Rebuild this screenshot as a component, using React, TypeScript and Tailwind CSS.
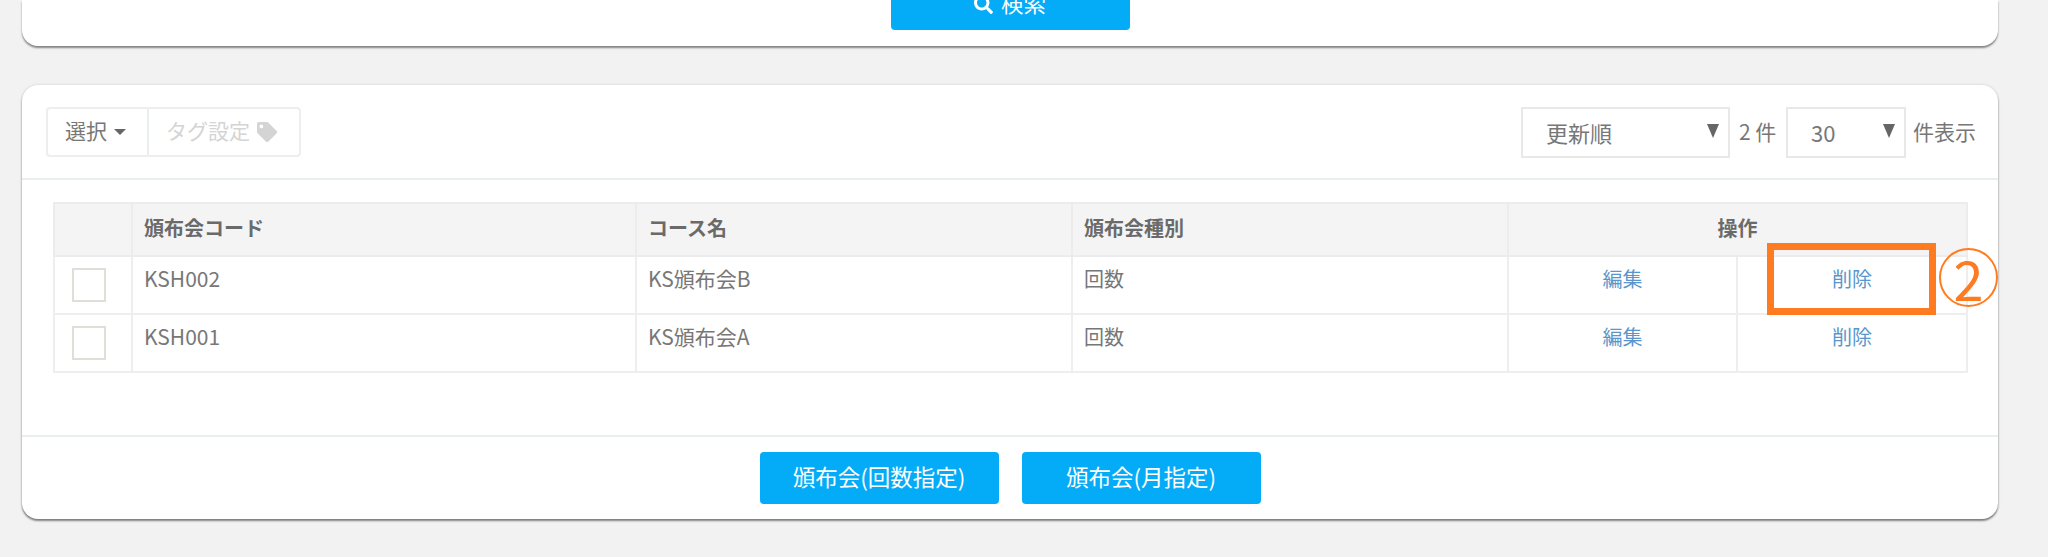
import React from 'react';
import { FaSearch, FaTag } from 'react-icons/fa';

const rows = [
  { code: 'KSH002', course: 'KS頒布会B', kind: '回数' },
  { code: 'KSH001', course: 'KS頒布会A', kind: '回数' },
];

const fontStack = { fontFamily: '"Noto Sans CJK JP", "Noto Sans", sans-serif' };

function SelectBox({ label, className }: { label: string; className: string }) {
  return (
    <div className={`h-[51px] flex items-center justify-between border-2 border-[#e8e8e8] bg-white pl-[23px] pr-[9px] text-[22px] text-[#777] ${className}`}>
      <span>{label}</span>
      <span className="w-0 h-0 border-x-[6px] border-x-transparent border-t-[14px] border-t-[#666] -mt-[3px]" />
    </div>
  );
}

function BlueButton({ children }: { children: React.ReactNode }) {
  return (
    <button className="w-[239px] h-[52px] shrink-0 flex items-center justify-center gap-2 rounded-[4px] bg-[#04abf7] text-white text-[22.5px]">
      {children}
    </button>
  );
}

export default function App() {
  return (
    <div className="h-[557px] overflow-hidden bg-[#f2f2f2] pl-[22px] pr-[50px]" style={fontStack}>
      {/* search card, cut off by the top of the page */}
      <div className="h-[46px] flex items-end justify-center pb-4 bg-white rounded-b-[16px] shadow-[0_2px_2px_rgba(0,0,0,0.45)]">
        <BlueButton>
          <FaSearch className="w-[19px] h-[19px]" />
          <span className="-mt-[3px]">検索</span>
        </BlueButton>
      </div>

      {/* list card */}
      <div className="relative mt-[39px] h-[434px] flex flex-col bg-white rounded-[16px] shadow-[0_2px_2px_rgba(0,0,0,0.45),0_0_3px_rgba(0,0,0,0.15)]">
        <div className="h-[95px] shrink-0 flex justify-between border-b-2 border-[#e9eeee] pt-[22px] pl-[24px] pr-[22px]">
          <div className="flex h-[50px] text-[21px] border-2 border-[#eeeeee] rounded-[4px]">
            <div className="w-[101px] flex items-center gap-[7px] pl-[17px] border-r-2 border-[#e8eeee] text-[#777]">
              <span className="-mt-[3px]">選択</span>
              <span className="w-0 h-0 border-x-[6px] border-x-transparent border-t-[6px] border-t-[#666]" />
            </div>
            <div className="w-[150px] flex items-center gap-[7px] pl-[17px] text-[#d4d4d4]">
              <span className="-mt-[3px]">タグ設定</span>
              <FaTag className="w-[20px] h-[20px] text-[#d4d4d4]" />
            </div>
          </div>
          <div className="flex items-start text-[21px] text-[#777]">
            <SelectBox label="更新順" className="w-[209px]" />
            <span className="ml-[9px] w-[47px] leading-[48px] whitespace-nowrap">2 件</span>
            <SelectBox label="30" className="w-[120px]" />
            <span className="ml-[7px] leading-[48px] whitespace-nowrap">件表示</span>
          </div>
        </div>

        <div className="pt-[22px] pl-[31px]">
          <table className="w-[1913px] table-fixed border-collapse text-[20px] text-[#777]">
            <colgroup>
              <col className="w-[78px]" />
              <col className="w-[504px]" />
              <col className="w-[436px]" />
              <col className="w-[436px]" />
              <col className="w-[229px]" />
              <col className="w-[230px]" />
            </colgroup>
            <thead>
              <tr className="h-[53px] bg-[#f4f4f4] font-bold text-[#6a6a6a]">
                <th className="border-2 border-[#ececec]" />
                <th className="border-2 border-[#ececec] pl-[11px] pb-[4px] text-left">頒布会コード</th>
                <th className="border-2 border-[#ececec] pl-[11px] pb-[4px] text-left">コース名</th>
                <th className="border-2 border-[#ececec] pl-[11px] pb-[4px] text-left">頒布会種別</th>
                <th colSpan={2} className="border-2 border-[#ececec] pb-[4px] text-center">操作</th>
              </tr>
            </thead>
            <tbody>
              {rows.map((row) => (
                <tr key={row.code} className="h-[58px]">
                  <td className="border-2 border-[#eeeeee] pr-[3px]">
                    <div className="w-[34px] h-[34px] ml-[17px] mb-[1px] border-2 border-[#dfdfda] bg-white" />
                  </td>
                  <td className="border-2 border-[#eeeeee] pl-[11px] pb-[12px] text-[21px]">{row.code}</td>
                  <td className="border-2 border-[#eeeeee] pl-[11px] pb-[12px] text-[21px]">{row.course}</td>
                  <td className="border-2 border-[#eeeeee] pl-[11px] pb-[12px]">{row.kind}</td>
                  <td className="border-2 border-[#eeeeee] pb-[12px] text-center text-[#5a96cc]">編集</td>
                  <td className="border-2 border-[#eeeeee] pb-[12px] text-center text-[#5a96cc]">削除</td>
                </tr>
              ))}
            </tbody>
          </table>
        </div>

        <div className="mt-auto h-[84px] shrink-0 flex justify-center gap-[23px] border-t-2 border-[#e9eeee] pt-[15px]">
          <BlueButton><span className="-mt-[3px]">頒布会(回数指定)</span></BlueButton>
          <BlueButton><span className="-mt-[3px]">頒布会(月指定)</span></BlueButton>
        </div>

        {/* annotation over the delete link */}
        <div className="absolute left-[1745px] top-[158px] w-[169px] h-[72px] border-[7px] border-[#ff7b22]" />
        <div className="absolute left-[1917px] top-[163px] w-[59px] h-[59px] flex items-center justify-center rounded-full border-2 border-[#ff7b22] text-[54px] leading-none text-[#ff7b22]">
          2
        </div>
      </div>
    </div>
  );
}
